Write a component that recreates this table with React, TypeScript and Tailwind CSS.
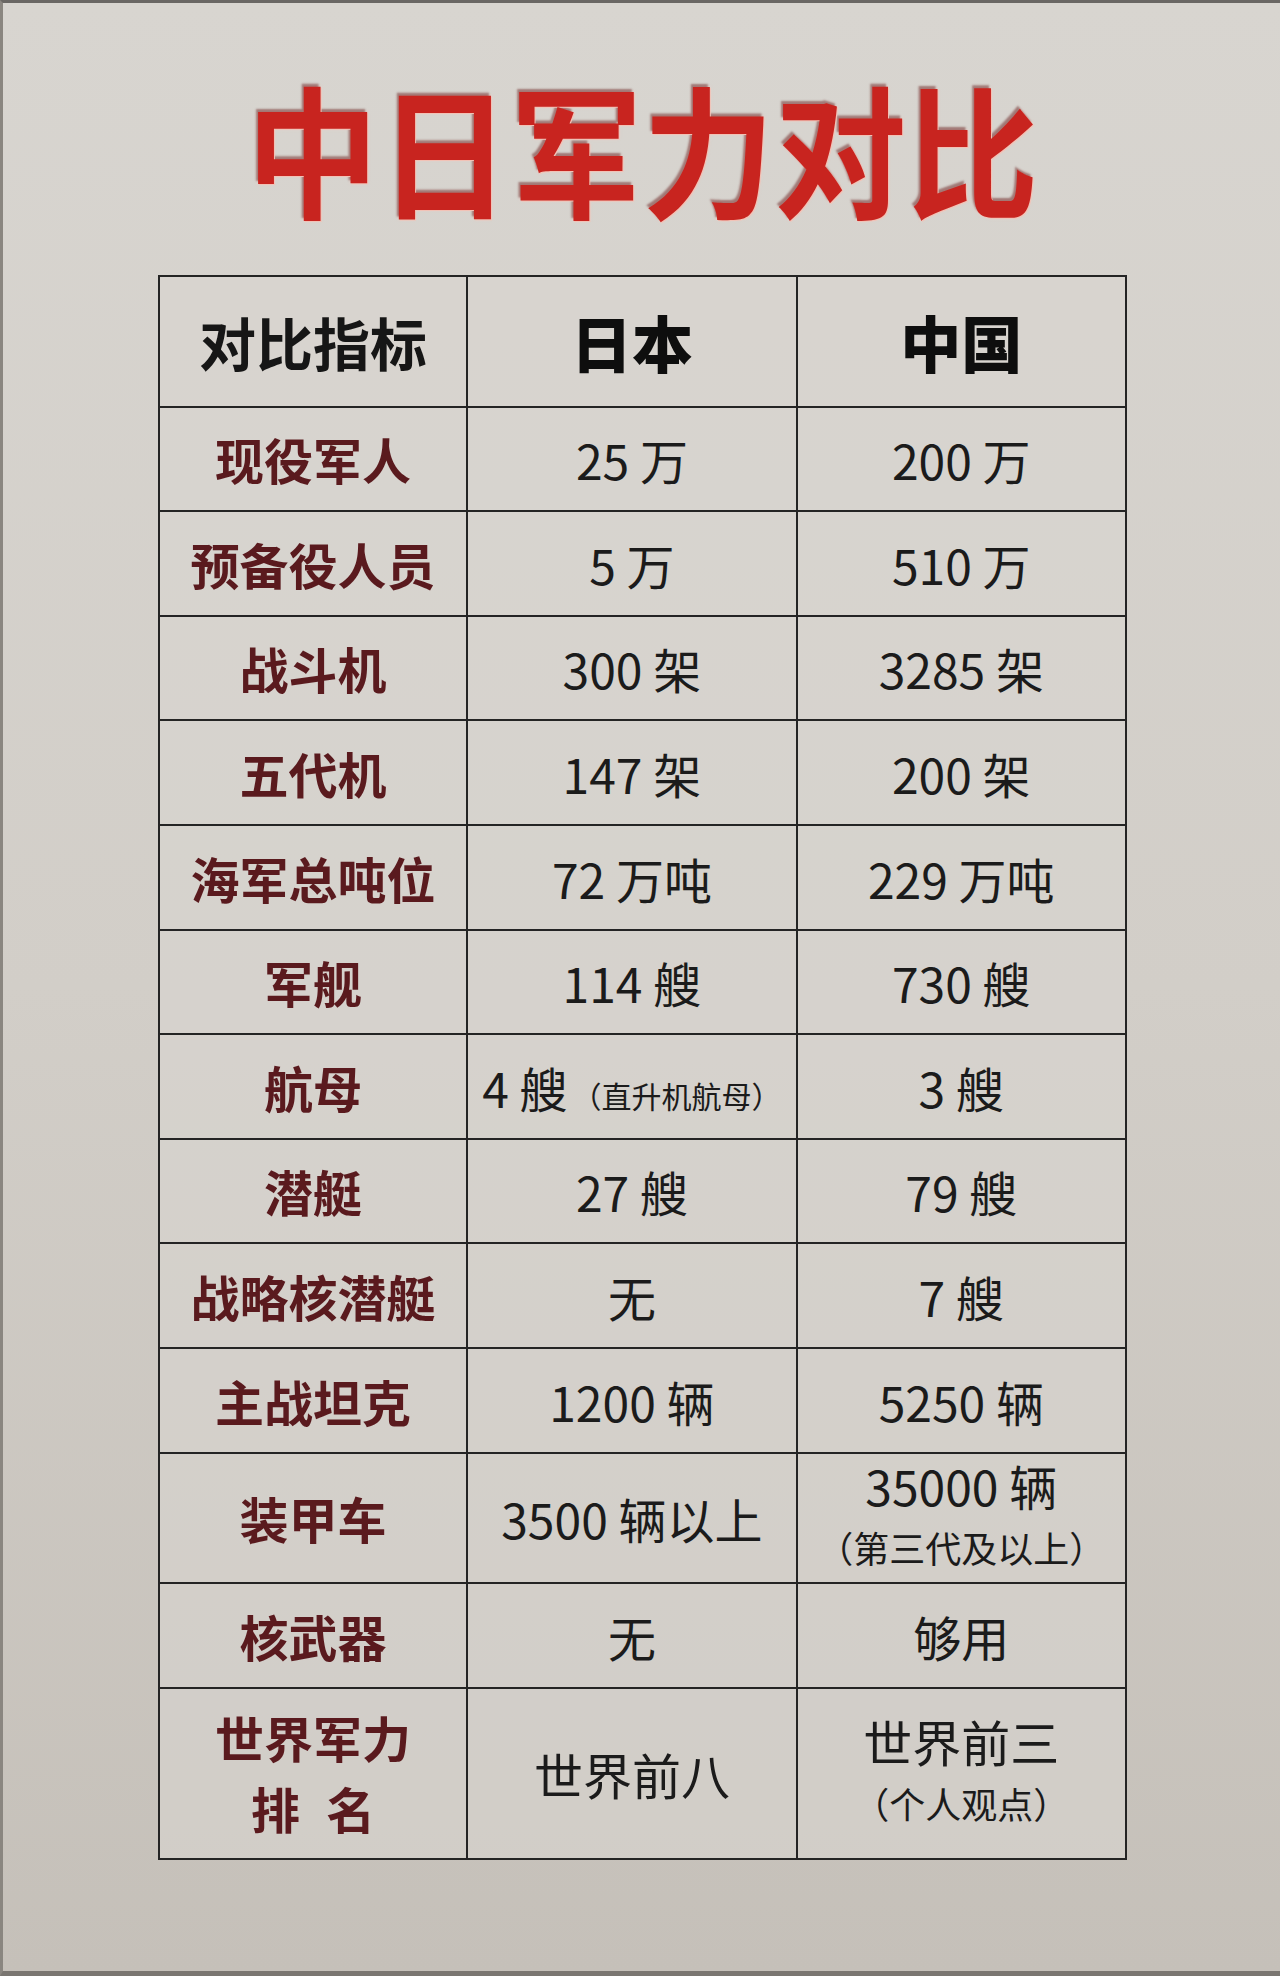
const font = "font-['Noto_Sans_CJK_SC','Noto_Sans',sans-serif]"

type Row = {
  label: React.ReactNode
  japan: React.ReactNode
  china: React.ReactNode
  height: string
}

const rows: Row[] = [
  { label: "现役军人", japan: "25 万", china: "200 万", height: "h-[104px]" },
  { label: "预备役人员", japan: "5 万", china: "510 万", height: "h-[105px]" },
  { label: "战斗机", japan: "300 架", china: "3285 架", height: "h-[104px]" },
  { label: "五代机", japan: "147 架", china: "200 架", height: "h-[105px]" },
  { label: "海军总吨位", japan: "72 万吨", china: "229 万吨", height: "h-[105px]" },
  { label: "军舰", japan: "114 艘", china: "730 艘", height: "h-[104px]" },
  {
    label: "航母",
    japan: (
      <span>
        4 艘<span className="ml-[4px] text-[30px]">（直升机航母）</span>
      </span>
    ),
    china: "3 艘",
    height: "h-[105px]",
  },
  { label: "潜艇", japan: "27 艘", china: "79 艘", height: "h-[104px]" },
  { label: "战略核潜艇", japan: "无", china: "7 艘", height: "h-[105px]" },
  { label: "主战坦克", japan: "1200 辆", china: "5250 辆", height: "h-[105px]" },
  {
    label: "装甲车",
    japan: "3500 辆以上",
    china: (
      <div className="flex flex-col items-center leading-[62px] pb-[4px]">
        <span>35000 辆</span>
        <span className="text-[36px]">（第三代及以上）</span>
      </div>
    ),
    height: "h-[129px]",
  },
  { label: "核武器", japan: "无", china: "够用", height: "h-[105px]" },
  {
    label: (
      <div className="flex flex-col items-center leading-[71px] pb-[4px]">
        <span>世界军力</span>
        <span className="[word-spacing:15px]">排 名</span>
      </div>
    ),
    japan: <span className="text-[49px]">世界前八</span>,
    china: (
      <div className="flex flex-col items-center leading-[63px] pb-[4px]">
        <span className="text-[49px]">世界前三</span>
        <span className="text-[36px]">（个人观点）</span>
      </div>
    ),
    height: "h-[171px]",
  },
]

const cell = "border-2 border-[#242424] text-center align-middle p-0"

export default function App() {
  return (
    <div
      className={`${font} w-[1280px] h-[1976px] flex flex-col items-center bg-gradient-to-b from-[#d8d5d0] via-[#d2cec8] to-[#c5c0b9] border-t-[3px] border-t-[#6a6764] border-b-[5px] border-b-[#7a7671] border-l-[3px] border-l-[#8a8680]`}
    >
      <div className="h-[272px] w-full flex justify-center items-start pt-[68px]">
        <h1 className="text-[132px] leading-[150px] font-bold tracking-[0px] scale-y-[1.08] text-[#c8241f] [text-shadow:1px_1px_0_#f2c2b6,-2px_-2px_2px_rgba(90,10,10,0.45),0_0_3px_rgba(255,200,190,0.7)] ml-[2px]">
          中日军力对比
        </h1>
      </div>

      <table className="border-collapse w-[969px] bg-[#d9d6d1]/60 ml-[2px]">
        <colgroup>
          <col className="w-[309px]" />
          <col className="w-[330px]" />
          <col className="w-[330px]" />
        </colgroup>
        <thead>
          <tr className="h-[131px]">
            <th className={`${cell} text-[57px] font-bold text-[#161616]`}>对比指标</th>
            <th className={`${cell} text-[61px] font-black text-[#0e0e0e]`}>日本</th>
            <th className={`${cell} text-[61px] font-black text-[#0e0e0e]`}>中国</th>
          </tr>
        </thead>
        <tbody>
          {rows.map((row: Row, index: number) => {
            return (
              <tr key={index} className={row.height}>
                <td className={`${cell} text-[49px] font-bold text-[#5a1a1e]`}>
                  <div className="flex justify-center">{row.label}</div>
                </td>
                <td className={`${cell} text-[48px] text-[#1b1b1b]`}>
                  <div className="flex justify-center">{row.japan}</div>
                </td>
                <td className={`${cell} text-[48px] text-[#1b1b1b]`}>
                  <div className="flex justify-center">{row.china}</div>
                </td>
              </tr>
            )
          })}
        </tbody>
      </table>
    </div>
  )
}
